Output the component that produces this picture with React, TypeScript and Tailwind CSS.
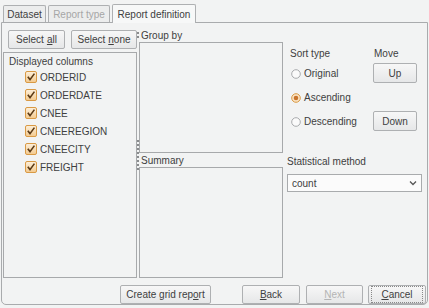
import React from "react";

const cols = ["ORDERID", "ORDERDATE", "CNEE", "CNEEREGION", "CNEECITY", "FREIGHT"];

const Check = () => (
  <svg width="12" height="12" viewBox="0 0 12 12" className="shrink-0">
    <defs>
      <linearGradient id="cb" x1="0" y1="0" x2="0" y2="1">
        <stop offset="0" stopColor="#fdf0dc" />
        <stop offset="1" stopColor="#f3c98d" />
      </linearGradient>
    </defs>
    <rect x="0.5" y="0.5" width="11" height="11" rx="1.5" fill="url(#cb)" stroke="#d99a45" />
    <path d="M2.8 5.8 L5 8.6 L9.4 2.6" fill="none" stroke="#5b3a16" strokeWidth="1.6" />
  </svg>
);

const Radio = ({ on }: { on?: boolean }) => (
  <svg width="10" height="10" viewBox="0 0 10 10" className="shrink-0">
    <circle cx="5" cy="5" r="4.3" fill={on ? "#fbe3c4" : "#fafafa"} stroke={on ? "#d99a45" : "#a9abad"} />
    {on && <circle cx="5" cy="5" r="2.3" fill="#c8742c" />}
  </svg>
);

const Btn = ({ w, children, dim, focus }: { w: string; children: React.ReactNode; dim?: boolean; focus?: boolean }) => (
  <div
    className={`${w} h-[19px] flex items-center justify-center border border-[#aeb0b2] rounded-[2px] bg-gradient-to-b from-[#f7f7f7] to-[#e6e7e8] ${dim ? "text-[#b4b4b4]" : "text-[#404040]"}`}
  >
    {focus ? (
      <div className="w-full h-full m-[2px] border border-dotted border-[#888] flex items-center justify-center">{children}</div>
    ) : (
      children
    )}
  </div>
);

export default function App() {
  return (
    <div className="w-[429px] h-[308px] bg-[#f2f3f3] font-['Liberation_Sans',Arial,sans-serif] text-[10px] text-[#404040] flex flex-col">
      {/* tabs */}
      <div className="flex items-end h-[22px] pl-[3px] gap-[2px]">
        <div className="w-[43px] h-[17px] border border-b-0 border-[#aeb0b2] rounded-t-[2px] flex items-center justify-center bg-[#eceded]">Dataset</div>
        <div className="w-[62px] h-[17px] border border-b-0 border-[#aeb0b2] rounded-t-[2px] flex items-center justify-center bg-[#eceded] text-[#a6a6a6]">Report type</div>
        <div className="w-[84px] h-[19px] border border-b-0 border-[#aeb0b2] rounded-t-[2px] flex items-center justify-center bg-[#f7f8f8] relative z-10 -mb-px">Report definition</div>
      </div>

      {/* panel */}
      <div className="flex-1 mx-[1px] mb-[3px] border border-[#a9abad] rounded-b-[5px] flex flex-col pt-[7px]">
        <div className="flex h-[248px] pl-[1px]">
          {/* left column */}
          <div className="w-[134px] flex flex-col">
            <div className="flex h-[20px] gap-[6px] pl-[5px]">
              <Btn w="w-[57px]">
                Select <span className="underline ml-[3px]">a</span>ll
              </Btn>
              <Btn w="w-[66px]">
                Select <span className="underline ml-[3px]">n</span>one
              </Btn>
            </div>
            <div className="mt-[2px] flex-1 border border-[#a7a9ab] pl-[5px] pt-[2px]">
              <div className="leading-[14px]">Displayed columns</div>
              <div className="flex flex-col gap-[6px] pl-[16px] mt-[2px]">
                {cols.map((c) => (
                  <div key={c} className="flex items-center gap-[3px] h-[12px]">
                    <Check />
                    <span>{c}</span>
                  </div>
                ))}
              </div>
            </div>
          </div>

          {/* splitter */}
          <div className="w-[2px] flex flex-col items-center">
            <div className="mt-[2px] flex flex-col gap-[2px]">
              <div className="w-[2px] h-[2px] bg-[#8a8c8e]" />
              <div className="w-[2px] h-[2px] bg-[#8a8c8e]" />
            </div>
            <div className="mt-[102px] flex flex-col gap-[2px]">
              {Array.from({ length: 8 }).map((_, i) => (
                <div key={i} className="w-[2px] h-[2px] bg-[#8a8c8e]" />
              ))}
            </div>
          </div>

          {/* middle column */}
          <div className="w-[144px] flex flex-col">
            <div className="h-[12px] leading-[12px] pl-[2px]">Group by</div>
            <div className="h-[111px] border border-[#a7a9ab]" />
            <div className="h-[13px] leading-[13px] pl-[2px] mt-px">Summary</div>
            <div className="flex-1 border border-[#a7a9ab]" />
          </div>

          {/* right column */}
          <div className="flex-1 pl-[4px] flex flex-col">
            <div className="pl-[3px] mt-[17px] grid grid-cols-[83px_44px]">
              <div className="h-[14px] leading-[14px]">Sort type</div>
              <div className="h-[14px] leading-[14px] pl-[1px]">Move</div>
              <div className="h-[24px] flex items-center gap-[3px] pl-[1px] pt-[1px]">
                <Radio /> <span>Original</span>
              </div>
              <div className="h-[24px] flex items-center">
                <Btn w="w-[44px] h-[20px]">Up</Btn>
              </div>
              <div className="h-[24px] flex items-center gap-[3px] pl-[1px] pt-[1px]">
                <Radio on /> <span>Ascending</span>
              </div>
              <div />
              <div className="h-[24px] flex items-center gap-[3px] pl-[1px] pt-[1px]">
                <Radio /> <span>Descending</span>
              </div>
              <div className="h-[24px] flex items-center">
                <Btn w="w-[44px] h-[20px]">Down</Btn>
              </div>
            </div>
            <div className="mt-[23px] leading-[12px]">Statistical method</div>
            <div className="mt-[6px] w-[135px] h-[18px] border border-[#a9abad] bg-[#fbfbfb] flex items-center justify-between px-[4px]">
              <span>count</span>
              <svg width="8" height="6" viewBox="0 0 8 6">
                <path d="M1 1.5 L4 4.5 L7 1.5" fill="none" stroke="#555" strokeWidth="1.3" />
              </svg>
            </div>
          </div>
        </div>

        {/* bottom buttons */}
        <div className="flex items-center mt-[7px] pl-[118px]">
          <Btn w="w-[91px]">
            Create grid rep<span className="underline">o</span>rt
          </Btn>
          <div className="ml-[31px]">
            <Btn w="w-[58px]">
              <span className="underline">B</span>ack
            </Btn>
          </div>
          <div className="ml-[6px]">
            <Btn w="w-[57px]" dim>
              <span className="underline">N</span>ext
            </Btn>
          </div>
          <div className="ml-[5px]">
            <Btn w="w-[58px]" focus>
              <span className="underline">C</span>ancel
            </Btn>
          </div>
        </div>
      </div>
    </div>
  );
}
